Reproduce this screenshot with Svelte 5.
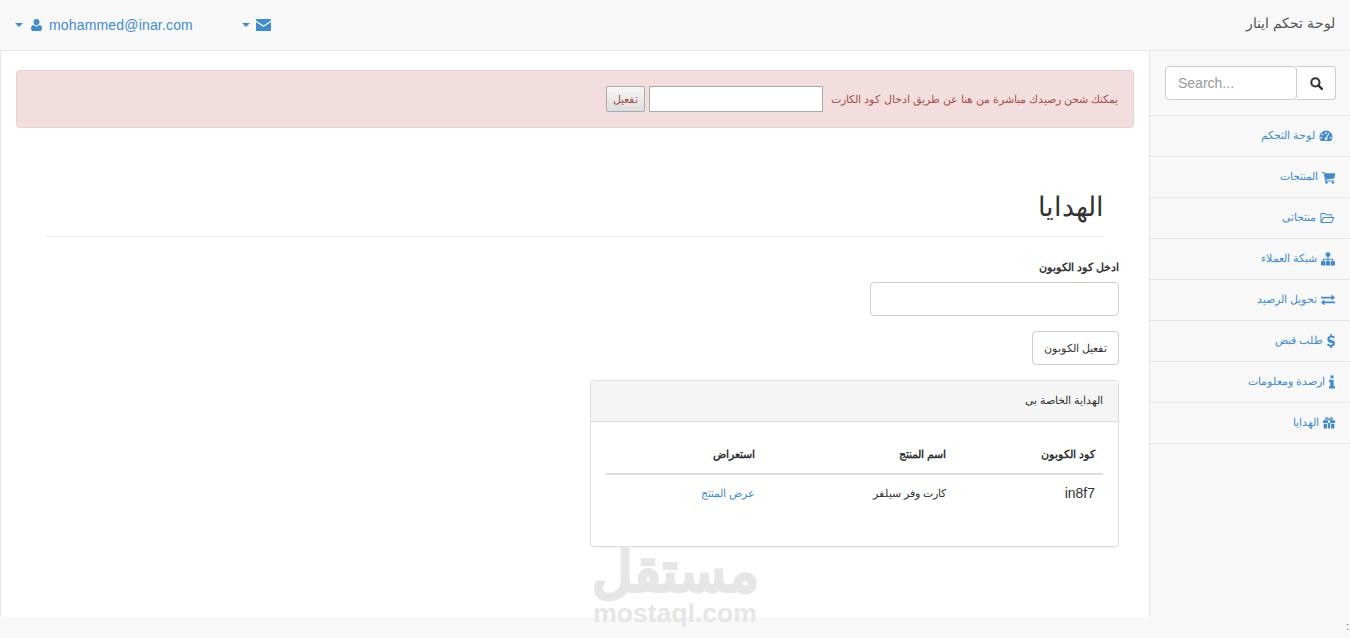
<script>
    const links = [
        { icon: "dashboard", label: "لوحة التحكم" },
        { icon: "cart", label: "المنتجات" },
        { icon: "folder", label: "منتجاتى" },
        { icon: "sitemap", label: "شبكة العملاء" },
        { icon: "exchange", label: "تحويل الرصيد" },
        { icon: "dollar", label: "طلب قبض" },
        { icon: "info", label: "ارصدة ومعلومات" },
        { icon: "gift", label: "الهدايا" },
    ];

    // the glyphs are not all the same width, so each gets its own box
    const boxes = {
        dashboard: "0 0 14 14",
        cart: "0.500 0 13.500 14",
        folder: "0 0 14 14",
        sitemap: "0 0 14 14",
        exchange: "0 0 14 14",
        dollar: "3 0 8 14",
        info: "4 0 6 14",
        gift: "0.500 0 13 14",
    };
</script>

{#snippet caret()}
    <span class="caret"></span>
{/snippet}

{#snippet icon(name)}
    <svg class="ico {name}" viewBox={boxes[name]} aria-hidden="true">
        {#if name === "dashboard"}
            <path fill-rule="evenodd" d="M7 1.500A6.500 6.500 0 0 0 .5 8c0 1.500.5 2.800 1.300 3.800.2.2.4.3.7.3h9c.3 0 .5-.1.7-.3.8-1 1.300-2.300 1.300-3.800A6.500 6.500 0 0 0 7 1.500zM7 3a.9.9 0 1 1 0 1.800A.9.9 0 0 1 7 3zM3.500 4.500a.9.9 0 1 1 0 1.800.9.9 0 0 1 0-1.800zM2.200 7.800a.9.9 0 1 1 0 1.800.9.9 0 0 1 0-1.800zM11.800 7.800a.9.9 0 1 1 0 1.800.9.9 0 0 1 0-1.800zM10.500 4.600 8 9a1.300 1.300 0 1 1-1-.4l2.600-4.500z" />
        {:else if name === "cart"}
            <path d="M.5 2H3l.4 1.300H14l-1.300 5.200-8 .9.300 1H12.500v1.100H3.800L2.200 3.100H.5z" />
            <circle cx="5" cy="12.500" r="1.200" />
            <circle cx="11.500" cy="12.500" r="1.200" />
        {:else if name === "folder"}
            <path fill-rule="evenodd" d="M0 3.200C0 2.500.5 2 1.200 2h3.300l1.200 1.300h4.600c.7 0 1.200.5 1.200 1.200V6H14l-2.600 6H.9C.4 12 0 11.600 0 11.100zM1 3.200v6.600L2.900 6h7.900V4.500c0-.2-.1-.3-.3-.3H5.300L4.100 3H1.200c-.1 0-.2.1-.2.200zM3.500 7 1.300 11h9.500l1.700-4z" />
        {:else if name === "sitemap"}
            <path d="M4.800.5h4.400v4H7.600v2.200h4.600v2.500H14V13.500H9.600V9.200h1.500V7.800H7.600v1.400H9V13.500H5V9.200h1.400V7.800H2.900v1.400H4.400V13.500H0V9.200h1.800V6.700h4.600V4.500H4.800z" />
        {:else if name === "exchange"}
            <path d="M0 3.700h10.500V1.600L14 4.600l-3.500 3V5.500H0zM14 8.500H3.500V6.400L0 9.400l3.500 3v-2.100H14z" />
        {:else if name === "dollar"}
            <path d="M6.300 0h1.600v1.800c1.200.1 2.200.5 3 1.100L10 4.500c-.9-.6-1.900-1-2.900-1-1 0-1.500.4-1.500 1 0 .7.6 1 2 1.500 2 .7 3.400 1.500 3.400 3.400 0 1.600-1.100 2.800-3.100 3.100V14H6.300v-1.500c-1.300-.1-2.500-.6-3.300-1.300l1-1.700c1 .8 2.100 1.200 3.200 1.200 1 0 1.600-.4 1.600-1.100S8.200 9.500 6.800 9C5 8.400 3.400 7.700 3.400 5c0-1.700 1.100-2.900 2.900-3.200z" />
        {:else if name === "info"}
            <path d="M5.500.5h3.100v2.800H5.500zM4 4.800h4.600v6.400H10V13.500H4v-2.300h1.300V7.100H4z" />
        {:else if name === "gift"}
            <path fill-rule="evenodd" d="M1 4h3.300C3 3.700 2.500 2.900 2.700 2c.2-1.100 1.500-1.700 2.500-1.100C6 1.400 6.700 2.300 7 3c.3-.7 1-1.600 1.800-2.100 1-.6 2.300 0 2.500 1.100.2.900-.3 1.700-1.600 2H13c.3 0 .5.200.5.500V7H.5V4.500C.5 4.200.7 4 1 4zM4.400 2c-.4-.2-.8.1-.8.500 0 .7 1 1 2.300 1.200C5.600 3 5 2.300 4.400 2zM9.600 2c-.6.300-1.200 1-1.500 1.700 1.300-.2 2.300-.5 2.300-1.200 0-.4-.4-.7-.8-.5zM5.800 4v9h2.400V4zM1.200 7.800h3.600V13H2c-.4 0-.8-.3-.8-.8zM9.200 7.800h3.600v4.400c0 .5-.4.800-.8.800H9.200z" />
        {/if}
    </svg>
{/snippet}

<div class="page" dir="rtl">
    <nav class="topbar">
        <span class="brand">لوحة تحكم اينار</span>
        <div class="top-links">
            <a class="top-link mail" href="#mail">
                <svg class="top-ico" viewBox="0 0 14 11" aria-hidden="true">
                    <path d="M.9 0h12.200c.5 0 .9.4.9.9v.4L7 6 0 1.300V.9C0 .4.400 0 .9 0zM0 2.700v7.400c0 .5.4.9.9.9h12.200c.5 0 .9-.4.9-.9V2.700L7 7.400z" />
                </svg>
                {@render caret()}
            </a>
            <a class="top-link user" href="#user">
                <span class="email" dir="ltr">mohammed@inar.com</span>
                <svg class="top-ico user-ico" viewBox="0 0 12 13" aria-hidden="true">
                    <path d="M6 0a3.200 3.200 0 0 1 3.200 3.300C9.200 5 8 7 6 7S2.800 5 2.800 3.300A3.200 3.200 0 0 1 6 0zM3 6.400C3.700 7.300 4.800 8 6 8s2.300-.7 3-1.600c1.700.2 3 1.200 3 3.800 0 1.700-1 2.800-2.400 2.800H2.400C1 13 0 11.900 0 10.200c0-2.600 1.300-3.600 3-3.800z" />
                </svg>
                {@render caret()}
            </a>
        </div>
    </nav>

    <div class="layout">
        <aside class="sidebar">
            <div class="search-row">
                <input class="search" type="text" placeholder="Search..." dir="ltr" />
                <button class="search-btn" type="button" aria-label="search">
                    <svg viewBox="0 0 14 14" width="13" height="13" aria-hidden="true">
                        <circle cx="5.800" cy="5.800" r="4.400" fill="none" stroke="#333" stroke-width="2.200" />
                        <path d="M9 9l3.800 3.800" stroke="#333" stroke-width="2.500" stroke-linecap="round" />
                    </svg>
                </button>
            </div>
            {#each links as link}
                <a class="side-link" href="#link">
                    {@render icon(link.icon)}
                    <span class="side-label">{link.label}</span>
                </a>
            {/each}
        </aside>

        <main class="content">
            <div class="alert">
                <span>يمكنك شحن رصيدك مباشرة من هنا عن طريق ادخال كود الكارت</span>
                <input class="alert-input" type="text" />
                <button class="alert-btn" type="button">تفعيل</button>
            </div>

            <div class="heading">
                <h1>الهدايا</h1>
            </div>

            <div class="col">
                <label class="field-label" for="coupon">ادخل كود الكوبون</label>
                <input class="field" id="coupon" type="text" />
                <button class="btn" type="button">تفعيل الكوبون</button>

                <section class="panel">
                    <div class="panel-head">الهداية الخاصة بى</div>
                    <div class="panel-body">
                        <table>
                            <thead>
                                <tr>
                                    <th class="c1">كود الكوبون</th>
                                    <th class="c2">اسم المنتج</th>
                                    <th class="c3">استعراض</th>
                                </tr>
                            </thead>
                            <tbody>
                                <tr>
                                    <td class="code">in8f7</td>
                                    <td>كارت وفر سيلفر</td>
                                    <td><a href="#view">عرض المنتج</a></td>
                                </tr>
                            </tbody>
                        </table>
                    </div>
                </section>
            </div>
        </main>
    </div>

    <div class="watermark" dir="ltr">
        <span class="wm-ar" dir="rtl">مستقل</span>
        <span class="wm-en">mostaql.com</span>
    </div>
    <span class="corner">:</span>
</div>

<style>
    :global(body) {
        margin: 0;
        background: #f8f8f8;
        font-family: "Liberation Sans", Arial, sans-serif;
        font-size: 14px;
        color: #333;
    }

    a {
        color: #428bca;
        text-decoration: none;
    }

    .page {
        position: relative;
        height: 638px;
        overflow: hidden;
    }

    .topbar {
        display: flex;
        justify-content: space-between;
        align-items: center;
        height: 50px;
        padding: 0 15px;
        border-bottom: 1px solid #e7e7e7;
    }

    .brand {
        font-size: 14px;
        color: #555;
        position: relative;
        top: -2px;
    }

    .top-links {
        display: flex;
        align-items: center;
    }

    .top-link {
        display: flex;
        align-items: center;
    }

    .mail {
        margin-left: 49px;
    }

    .top-ico {
        width: 15px;
        height: 12px;
        fill: #428bca;
    }

    .user-ico {
        width: 11px;
        height: 12px;
        margin: 0 7px 0 8px;
    }

    .email {
        letter-spacing: 0.17px;
    }

    .caret {
        display: inline-block;
        margin-right: 6px;
        border-top: 4px solid #428bca;
        border-left: 4px solid transparent;
        border-right: 4px solid transparent;
    }

    .user .caret {
        margin-right: 0;
    }

    .layout {
        display: flex;
        height: 566px;
    }

    .sidebar {
        width: 200px;
        flex: none;
    }

    .search-row {
        display: flex;
        direction: ltr;
        justify-content: flex-end;
        height: 34px;
        padding: 15px 14px 15px 15px;
        border-bottom: 1px solid #e7e7e7;
    }

    .search {
        width: 132px;
        height: 34px;
        box-sizing: border-box;
        padding: 6px 12px;
        border: 1px solid #ccc;
        border-radius: 4px;
        font: 14px "Liberation Sans", Arial, sans-serif;
        color: #555;
        background: #fff;
        outline: none;
    }

    .search::placeholder {
        color: #999;
    }

    .search-btn {
        display: flex;
        align-items: center;
        justify-content: center;
        width: 39px;
        height: 34px;
        padding: 0;
        border: 1px solid #ccc;
        border-left: 0;
        border-radius: 0 4px 4px 0;
        background: #fff;
    }

    .side-link {
        display: flex;
        align-items: center;
        height: 40px;
        padding: 0 15px;
        font-size: 11px;
        border-bottom: 1px solid #e7e7e7;
    }

    .side-label {
        margin-top: -2px;
    }

    .ico {
        width: 14px;
        height: 14px;
        fill: #428bca;
        margin-left: 4px;
        flex: none;
    }

    .ico.dashboard {
        margin-right: 2px;
    }

    .ico.cart {
        width: 13.500px;
    }

    .ico.folder {
        width: 15px;
    }

    .ico.dollar {
        width: 8px;
    }

    .ico.info {
        width: 6px;
    }

    .ico.gift {
        width: 12px;
    }

    .content {
        flex: 1;
        height: 566px;
        box-sizing: border-box;
        padding: 19px 15px 0;
        background: #fff;
        border-left: 1px solid #e7e7e7;
        border-right: 1px solid #e7e7e7;
    }

    .alert {
        display: flex;
        align-items: center;
        height: 58px;
        box-sizing: border-box;
        padding: 0 15px;
        background: #f2dede;
        border: 1px solid #ebccd1;
        border-radius: 4px;
        color: #a5504e;
        font-size: 11px;
    }

    .alert-input {
        width: 174px;
        height: 26px;
        box-sizing: border-box;
        margin: 0 8px 0 4px;
        border: 1px solid #a9a9a9;
        background: #fff;
    }

    .alert-btn {
        width: 39px;
        height: 26px;
        padding: 0;
        border: 1px solid #aaa;
        border-radius: 2px;
        background: linear-gradient(#f6f6f6, #dedede);
        color: #a5504e;
        font: 11px "Liberation Sans", Arial, sans-serif;
    }

    .heading {
        margin: 0 30px;
        padding-top: 59px;
        height: 49px;
        border-bottom: 1px solid #eee;
    }

    h1 {
        margin: 0;
        font-size: 27px;
        font-weight: 400;
        line-height: 40px;
        color: #333;
    }

    .col {
        display: flex;
        flex-direction: column;
        align-items: flex-start;
        width: 529px;
        margin-right: 15px;
        padding-top: 20px;
    }

    .field-label {
        font-size: 11px;
        font-weight: 700;
        line-height: 20px;
        margin-bottom: 5px;
    }

    .field {
        width: 249px;
        height: 34px;
        box-sizing: border-box;
        border: 1px solid #ccc;
        border-radius: 4px;
        background: #fff;
    }

    .btn {
        width: 87px;
        height: 34px;
        margin-top: 15px;
        padding: 0;
        border: 1px solid #ccc;
        border-radius: 4px;
        background: #fff;
        color: #333;
        font: 11px "Liberation Sans", Arial, sans-serif;
    }

    .panel {
        align-self: stretch;
        margin-top: 15px;
        height: 167px;
        box-sizing: border-box;
        border: 1px solid #ddd;
        border-radius: 4px;
        box-shadow: 0 1px 1px rgba(0, 0, 0, 0.05);
    }

    .panel-head {
        height: 40px;
        line-height: 38px;
        padding: 0 15px;
        font-size: 11px;
        background: #f5f5f5;
        border-bottom: 1px solid #ddd;
        border-radius: 3px 3px 0 0;
    }

    .panel-body {
        padding: 15px;
    }

    table {
        width: 100%;
        border-collapse: collapse;
        font-size: 11px;
    }

    th {
        height: 37px;
        padding: 0 8px 2px;
        box-sizing: border-box;
        text-align: right;
        font-weight: 700;
        border-bottom: 2px solid #ddd;
    }

    td {
        height: 37px;
        padding: 0 8px;
        box-sizing: border-box;
    }

    .c1 {
        width: 149px;
    }

    .c2 {
        width: 191px;
    }

    .code {
        font-size: 14px;
    }

    .watermark {
        position: absolute;
        left: 593px;
        top: 544px;
        width: 164px;
        display: flex;
        flex-direction: column;
        align-items: center;
        color: #e6e6e6;
        font-weight: 700;
    }

    .wm-ar {
        font-size: 56px;
        line-height: 56px;
        height: 56px;
        -webkit-text-stroke: 2px #e6e6e6;
    }

    .wm-en {
        font-size: 26.500px;
        line-height: 26px;
    }

    .corner {
        position: absolute;
        right: 1px;
        top: 620px;
        font-size: 11px;
        color: #666;
    }
</style>
